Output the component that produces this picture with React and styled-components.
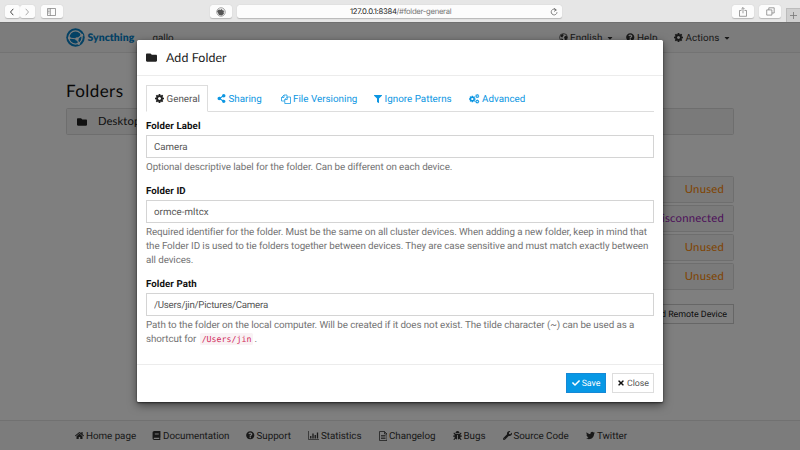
import React from 'react';
import styled, { createGlobalStyle } from 'styled-components';
import { FaFolder, FaShareAlt, FaFilter, FaCheck, FaTimes, FaHome, FaBook, FaQuestionCircle, FaBug, FaWrench, FaTwitter, FaCaretDown } from 'react-icons/fa';

const Global = createGlobalStyle`
  * { box-sizing: border-box; }
  body { margin: 0; overflow: hidden; background: #fff; font-family: Roboto, "Liberation Sans", sans-serif; text-rendering: geometricPrecision; }
  input, button { text-rendering: geometricPrecision; }
`;

const Browser = styled.div`
  width: 800px; height: 450px; display: flex; flex-direction: column; overflow: hidden;
  font-size: 9.6px; color: #333;
`;
const Chrome = styled.header`
  height: 22px; flex: none; background: #e6e6e6; display: flex; align-items: flex-start; padding: 5px 0 0 5px;
`;
const ChromeButton = styled.div`
  width: ${p => p.$w || 22}px; height: 13px; margin-right: ${p => p.$gap || 0}px; flex: none;
  display: flex; align-items: center; justify-content: center;
  border-radius: 2.5px; background: #fcfcfc; box-shadow: 0 0.5px 1px rgba(0,0,0,.2); color: #555;
`;
const Address = styled.div`
  width: 327px; height: 13px; margin-right: 170px; display: flex; align-items: center; padding: 0 4px 0 113px;
  background: #fcfcfc; border-radius: 2.5px; box-shadow: 0 0.5px 1px rgba(0,0,0,.2);
  font: 400 7.7px Inter, sans-serif; letter-spacing: -.29px; color: #777; white-space: pre;
  b { font-weight: 400; color: #222; }
  svg { margin-left: auto; }
`;
const NewTab = styled.div`
  width: 14px; height: 14px; margin-top: 3px; flex: none; background: #cfcfcf; border: 1px solid #bcbcbc; border-width: 1px 0 0 1px;
  display: flex; align-items: center; justify-content: center;
`;

const Text = styled.span`padding-top: 1.5px;`;

const Page = styled.div`position: relative; flex: 1; display: flex; flex-direction: column; background: #fff;`;
const Navbar = styled.nav`
  height: 31px; flex: none; background: #f8f8f8; border-top: 1px solid #e0e0e0; border-bottom: 1px solid #e7e7e7;
  display: flex; align-items: center; padding-left: 66px;
`;
const Brand = styled.div`
  display: flex; align-items: center; gap: 2.5px; width: 86.5px; font: 800 10.4px Lato, sans-serif; letter-spacing: .06px; color: #0882c8;
`;
const Device = styled.div`width: 406px; padding-top: 1.5px; font-size: 9.8px; letter-spacing: 0;`;
const NavItem = styled.div`width: ${p => p.$w}px; display: flex; align-items: center; gap: 2.5px; font-size: 9.9px; letter-spacing: .08px;`;
const Caret = styled(FaCaretDown)`width: 6px; height: 8px; margin-left: 2px;`;

const Content = styled.main`width: 668px; margin-left: 66px; flex: 1; display: flex; flex-direction: column;`;
const Heading = styled.h3`margin: 27px 0 7px; height: 21px; font: 400 17px/21px Lato, sans-serif; letter-spacing: .42px; color: #111;`;
const Panel = styled.div`
  height: 27px; flex: none; border: 1px solid #ddd; border-radius: 1.5px; background: #f5f5f5;
  display: flex; align-items: center; padding: 0 10px; font: 400 11.2px Lato, sans-serif; letter-spacing: .12px; color: #222;
  svg { margin-right: 11px; }
`;
const Devices = styled.div`width: 325px; margin: 41px 0 0 auto; display: flex; flex-direction: column; gap: 2px;`;
const Status = styled.span`margin-left: auto; margin-right: -1px; color: ${p => p.$color}; font-size: 11.3px; letter-spacing: .22px;`;
const AddDevice = styled.button`
  align-self: flex-end; margin-top: 12px; width: 101px; height: 20px; padding: 1px 6px 0; border: 1px solid #ccc; background: #fff;
  font: 400 8.9px Roboto, sans-serif; letter-spacing: -.02px; text-align: right; white-space: nowrap; color: #222;
`;
const Footer = styled.footer`
  height: 30px; flex: none; border-top: 1px solid #e3e3e3; background: #f8f8f8; display: flex; align-items: center; padding-left: 75px;
`;
const FooterLink = styled.a`
  width: ${p => p.$w}px; display: flex; align-items: center; gap: 2px; white-space: nowrap; font-size: 9.8px; letter-spacing: -.03px; color: #333;
`;

const Backdrop = styled.div`
  position: absolute; inset: 0; background: rgba(0,0,0,.5); display: flex; justify-content: center; align-items: flex-start; padding-top: 18px;
`;
const Modal = styled.section`
  width: 526px; height: 362px; background: #fff; border-radius: 1.5px; box-shadow: 0 1px 2px rgba(0,0,0,.55), 0 3px 10px rgba(0,0,0,.5);
  display: flex; flex-direction: column;
`;
const ModalHeader = styled.header`
  height: 36px; flex: none; border-bottom: 1px solid #ececec; display: flex; align-items: center; gap: 9px; padding-left: 9px;
  font: 400 12.4px Lato, sans-serif; letter-spacing: .1px; color: #222;
`;
const ModalBody = styled.div`padding: 9px 9px 0; flex: 1;`;
const Tabs = styled.div`height: 27px; display: flex; border-bottom: 1px solid #ddd;`;
const Tab = styled.div`
  width: ${p => p.$w}px; height: 27px; padding-left: 8px; display: flex; align-items: center; gap: 2.5px; white-space: nowrap;
  font-size: 9.8px; letter-spacing: .02px;
  border: 1px solid ${p => p.$active ? '#ddd' : 'transparent'}; border-bottom-color: ${p => p.$active ? '#fff' : 'transparent'};
  color: ${p => p.$active ? '#555' : '#0c96e2'};
  svg { color: ${p => p.$active ? '#222' : '#0c96e2'}; }
`;
const Field = styled.div`height: ${p => p.$h}px; padding-top: 7px;`;
const Label = styled.label`display: block; height: 16px; padding-top: 1px; line-height: 13px; font-weight: 700; font-size: 9.7px; letter-spacing: .08px; color: #111;`;
const Input = styled.input`
  display: block; width: 508px; height: 23px; padding: 1px 7px 0; border: 1px solid #d4d4d4; outline: 0; background: #fff;
  font: 400 9.7px Roboto, sans-serif; letter-spacing: ${p => p.$ls || 0}px; color: #555;
`;
const Help = styled.p`margin: 3px 0 0; line-height: 14px; color: #737373; font-size: 9.8px; letter-spacing: -.084px; white-space: nowrap;`;
const Code = styled.code`
  margin: 0 1px; padding: 1px 2px; border-radius: 1.5px; background: #f9f2f4; color: #d22c5c;
  font: 8.3px "DejaVu Sans Mono", monospace; letter-spacing: -.02px;
`;
const ModalFooter = styled.footer`
  height: 38px; flex: none; border-top: 1px solid #ececec; display: flex; justify-content: flex-end; gap: 6px; padding: 8px 9px;
`;
const Action = styled.button`
  width: ${p => p.$w}px; height: 20px; padding: 0; display: flex; align-items: center; justify-content: center; gap: 2px;
  border: 1px solid ${p => p.$primary ? '#1688d5' : '#ddd'}; background: ${p => p.$primary ? '#0798e5' : '#fff'};
  color: ${p => p.$primary ? '#fff' : '#555'}; font: 400 8.8px Roboto, sans-serif; letter-spacing: -.04px;
  svg { color: ${p => p.$primary ? '#fff' : '#111'}; }
`;

const COG = 'M1152 896q0-106-75-181t-181-75-181 75-75 181 75 181 181 75 181-75 75-181zm512-109v222q0 12-8 23t-20 13l-185 28q-19 54-39 91 35 50 107 138 10 12 10 25t-9 23q-27 37-99 108t-94 71q-12 0-26-9l-138-108q-44 23-91 38-16 136-29 186-7 28-36 28h-222q-14 0-24.5-8.5t-11.5-21.5l-28-184q-49-16-90-37l-141 107q-10 9-25 9-14 0-25-11-126-114-165-168-7-10-7-23 0-12 8-23 15-21 51-66.5t54-70.5q-27-50-41-99l-183-27q-13-2-21-12.5t-8-23.5v-222q0-12 8-23t19-13l186-28q14-46 39-92-40-57-107-138-10-12-10-24 0-10 9-23 26-36 98.5-107.5t94.5-71.5q13 0 26 10l138 107q44-23 91-38 16-136 29-186 7-28 36-28h222q14 0 24.5 8.5t11.5 21.5l28 184q49 16 90 37l142-107q9-9 24-9 13 0 25 10 129 119 165 170 7 8 7 22 0 12-8 23-15 21-51 66.5t-54 70.5q26 50 41 98l183 28q13 2 21 12.5t8 23.5z';
const Cog = () => <svg width="9" height="9" viewBox="128 128 1536 1536" fill="currentColor"><path d={COG} /></svg>;
const Cogs = () => (
  <svg width="10.5" height="10" viewBox="0 0 21 20" fill="currentColor">
    <path transform="translate(-1.1 2.3) scale(.0086)" d={COG} />
    <path transform="translate(11.8 -.5) scale(.0052)" d={COG} />
    <path transform="translate(11.8 10.5) scale(.0052)" d={COG} />
  </svg>
);
const Copy = () => (
  <svg width="10" height="10" viewBox="0 0 20 20" fill="none" stroke="currentColor" strokeWidth="1.5">
    <path d="M7.5 14H1V7l5-5h6v4M6 2v5H1M12.5 6H19v13H7.5v-8zM12.5 6v5h-5" />
  </svg>
);
const Chart = () => (
  <svg width="11" height="9" viewBox="0 0 22 18" fill="none" stroke="currentColor">
    <path strokeWidth="1.3" d="M1 0v17h21" /><path strokeWidth="2.6" d="M5.5 15v-5M10 15V5M14.5 15V8M19 15V3" />
  </svg>
);
const FileText = () => (
  <svg width="8.5" height="10" viewBox="0 0 17 20" fill="none" stroke="currentColor" strokeWidth="1.5">
    <path d="M1 1h10l5 5v13H1zM11 1v5h5M4 9h9M4 12h9M4 15h9" />
  </svg>
);
const Globe = () => (
  <svg width="9" height="9" viewBox="0 0 18 18" fill="currentColor">
    <circle cx="9" cy="9" r="7.8" fill="none" stroke="currentColor" strokeWidth="1.5" />
    <path d="M3 5l4-3 3 2-2 2-1 3-3-1zM10 8l4-3 3 3-2 5-3 2-1-4zM4 11l4 1 0 4-3-1z" />
  </svg>
);
const Logo = () => (
  <svg width="19" height="19" viewBox="0 0 38 38" fill="none">
    <circle cx="19" cy="19" r="18.5" fill="#0882c8" />
    <circle cx="19" cy="19" r="13.2" stroke="#f8f8f8" strokeWidth="2.5" />
    <path d="M22 22L32 14M22 22L6 20M22 22L26 31" stroke="#f8f8f8" strokeWidth="2.4" />
    <circle cx="22" cy="22" r="3.6" fill="#f8f8f8" />
    <circle cx="31.5" cy="14.5" r="2.8" fill="#f8f8f8" />
    <circle cx="6.5" cy="20" r="2.8" fill="#f8f8f8" />
    <circle cx="25.5" cy="31" r="2.8" fill="#f8f8f8" />
  </svg>
);
const Chevron = ({ d, color }) => <svg width="6" height="8" viewBox="0 0 6 8" fill="none" stroke={color}><path d={d} /></svg>;
const SidebarIcon = () => <svg width="9" height="8" viewBox="0 0 9 8" fill="none" stroke="#777" strokeWidth=".7"><path d="M.5.5h8v7h-8zM3.3.5v7M1.2 2h1.3M1.2 3.5h1.3M1.2 5h1.3" /></svg>;
const SiteIcon = () => <svg width="10" height="10" viewBox="0 0 10 10"><circle cx="5" cy="5" r="4.3" fill="#eee" stroke="#888" strokeWidth=".7" /><path d="M1 4l2-1.5 1.5.5 1-1 1 1.2L8.5 4 7.5 5l.5 1.5L6 8.5 3 8z" fill="#555" /></svg>;
const Reload = () => <svg width="8" height="8" viewBox="0 0 8 8" fill="none" stroke="#666" strokeWidth=".8"><path d="M6.2 2A2.9 2.9 0 1 0 7 4.2M3.8.1L6.3 2 4 3.4" /></svg>;
const Share = () => <svg width="8" height="10" viewBox="0 0 8 10" fill="none" stroke="#777" strokeWidth=".7"><path d="M2.5 3.5h-2v5.8h7V3.5h-2M4 6.3V.7M2.3 2.2L4 .5l1.7 1.7" /></svg>;
const TabsIcon = () => <svg width="9" height="9" viewBox="0 0 9 9" fill="none" stroke="#777" strokeWidth=".7"><path d="M.7 2.9h5.2v5.2H.7zM2.8 2.9V.8h5.4V6H5.9" /></svg>;

const LINKS = [
  ['Home page', <FaHome size={9} />, 77], ['Documentation', <FaBook size={9} />, 94],
  ['Support', <FaQuestionCircle size={8.5} />, 62], ['Statistics', <Chart />, 70.5],
  ['Changelog', <FileText />, 74], ['Bugs', <FaBug size={9} />, 50],
  ['Source Code', <FaWrench size={9} />, 83.5], ['Twitter', <FaTwitter size={9} />, 60],
];
const STATUSES = [['Unused', '#ff8800'], ['Disconnected', '#9b26b6'], ['Unused', '#ff8800'], ['Unused', '#ff8800']];

export default function App() {
  return (
    <Browser>
      <Global />
      <Chrome>
        <ChromeButton $w={14.5} $gap={0.5}><Chevron d="M4.3.8L1.5 4l2.8 3.2" color="#444" /></ChromeButton>
        <ChromeButton $w={14.5} $gap={6}><Chevron d="M1.7.8L4.5 4 1.7 7.2" color="#aaa" /></ChromeButton>
        <ChromeButton $gap={147.5}><SidebarIcon /></ChromeButton>
        <ChromeButton $gap={5}><SiteIcon /></ChromeButton>
        <Address><b>127.0.0.1:8384</b>/#folder-general<Reload /></Address>
        <ChromeButton $gap={5}><Share /></ChromeButton>
        <ChromeButton $gap={5}><TabsIcon /></ChromeButton>
        <NewTab><svg width="7" height="7" viewBox="0 0 7 7" stroke="#777" strokeWidth=".8"><path d="M3.5 0v7M0 3.5h7" /></svg></NewTab>
      </Chrome>
      <Page>
        <Navbar>
          <Brand><Logo />Syncthing</Brand>
          <Device>gallo</Device>
          <NavItem $w={67.5}><Globe /><Text>English</Text><Caret /></NavItem>
          <NavItem $w={48}><FaQuestionCircle size={8.5} /><Text>Help</Text></NavItem>
          <NavItem $w={70}><Cog /><Text>Actions</Text><Caret /></NavItem>
        </Navbar>
        <Content>
          <Heading>Folders</Heading>
          <Panel><FaFolder size={10} />Desktop</Panel>
          <Devices>
            {STATUSES.map(([text, color], i) => <Panel key={i}><Status $color={color}>{text}</Status></Panel>)}
            <AddDevice>Add Remote Device</AddDevice>
          </Devices>
        </Content>
        <Footer>{LINKS.map(([text, icon, w]) => <FooterLink key={text} $w={w}>{icon}<Text>{text}</Text></FooterLink>)}</Footer>
        <Backdrop>
          <Modal>
            <ModalHeader><FaFolder size={11} />Add Folder</ModalHeader>
            <ModalBody>
              <Tabs>
                <Tab $w={62} $active><Cog /><Text>General</Text></Tab>
                <Tab $w={63.5}><FaShareAlt size={9} /><Text>Sharing</Text></Tab>
                <Tab $w={93.5}><Copy /><Text>File Versioning</Text></Tab>
                <Tab $w={95}><FaFilter size={8} /><Text>Ignore Patterns</Text></Tab>
                <Tab $w={75}><Cogs /><Text>Advanced</Text></Tab>
              </Tabs>
              <Field $h={65}>
                <Label>Folder Label</Label><Input defaultValue="Camera" />
                <Help>Optional descriptive label for the folder. Can be different on each device.</Help>
              </Field>
              <Field $h={93}>
                <Label>Folder ID</Label><Input defaultValue="ormce-mltcx" $ls={0.05} />
                <Help>Required identifier for the folder. Must be the same on all cluster devices. When adding a new folder, keep in mind that<br />the Folder ID is used to tie folders together between devices. They are case sensitive and must match exactly between<br />all devices.</Help>
              </Field>
              <Field $h={90}>
                <Label>Folder Path</Label><Input defaultValue="/Users/jin/Pictures/Camera" $ls={-0.22} />
                <Help>Path to the folder on the local computer. Will be created if it does not exist. The tilde character (~) can be used as a<br />shortcut for <Code>/Users/jin</Code>.</Help>
              </Field>
            </ModalBody>
            <ModalFooter>
              <Action $w={40} $primary><FaCheck size={8} /><Text>Save</Text></Action>
              <Action $w={42}><FaTimes size={8} /><Text>Close</Text></Action>
            </ModalFooter>
          </Modal>
        </Backdrop>
      </Page>
    </Browser>
  );
}
